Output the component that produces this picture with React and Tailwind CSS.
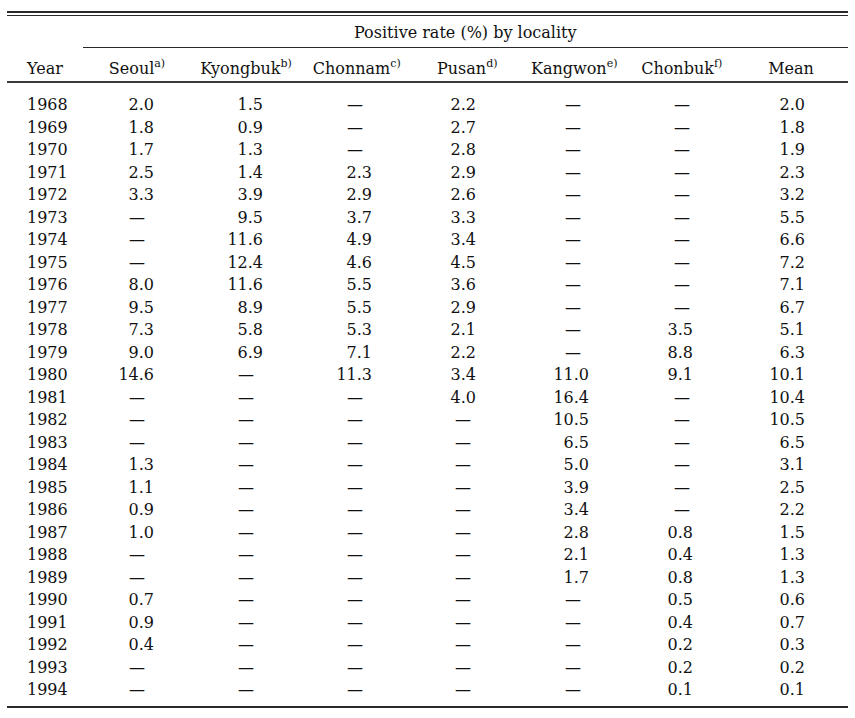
// Positive rate by locality table
import React from 'react';

const D = '—';

const rows = [
  ['1968', '2.0', '1.5', D, '2.2', D, D, '2.0'],
  ['1969', '1.8', '0.9', D, '2.7', D, D, '1.8'],
  ['1970', '1.7', '1.3', D, '2.8', D, D, '1.9'],
  ['1971', '2.5', '1.4', '2.3', '2.9', D, D, '2.3'],
  ['1972', '3.3', '3.9', '2.9', '2.6', D, D, '3.2'],
  ['1973', D, '9.5', '3.7', '3.3', D, D, '5.5'],
  ['1974', D, '11.6', '4.9', '3.4', D, D, '6.6'],
  ['1975', D, '12.4', '4.6', '4.5', D, D, '7.2'],
  ['1976', '8.0', '11.6', '5.5', '3.6', D, D, '7.1'],
  ['1977', '9.5', '8.9', '5.5', '2.9', D, D, '6.7'],
  ['1978', '7.3', '5.8', '5.3', '2.1', D, '3.5', '5.1'],
  ['1979', '9.0', '6.9', '7.1', '2.2', D, '8.8', '6.3'],
  ['1980', '14.6', D, '11.3', '3.4', '11.0', '9.1', '10.1'],
  ['1981', D, D, D, '4.0', '16.4', D, '10.4'],
  ['1982', D, D, D, D, '10.5', D, '10.5'],
  ['1983', D, D, D, D, '6.5', D, '6.5'],
  ['1984', '1.3', D, D, D, '5.0', D, '3.1'],
  ['1985', '1.1', D, D, D, '3.9', D, '2.5'],
  ['1986', '0.9', D, D, D, '3.4', D, '2.2'],
  ['1987', '1.0', D, D, D, '2.8', '0.8', '1.5'],
  ['1988', D, D, D, D, '2.1', '0.4', '1.3'],
  ['1989', D, D, D, D, '1.7', '0.8', '1.3'],
  ['1990', '0.7', D, D, D, D, '0.5', '0.6'],
  ['1991', '0.9', D, D, D, D, '0.4', '0.7'],
  ['1992', '0.4', D, D, D, D, '0.2', '0.3'],
  ['1993', D, D, D, D, D, '0.2', '0.2'],
  ['1994', D, D, D, D, D, '0.1', '0.1'],
];

// dashes sit a little left of the numbers' right edge, per column
const dashPad = ['pr-[9px]', 'pr-[9px]', 'pr-[9px]', 'pr-[5px]', 'pr-[8px]', 'pr-[3px]', 'pr-[3px]'];

const headers = [
  ['Seoul', 'a)'],
  ['Kyongbuk', 'b)'],
  ['Chonnam', 'c)'],
  ['Pusan', 'd)'],
  ['Kangwon', 'e)'],
  ['Chonbuk', 'f)'],
  ['Mean', null],
];

const App = () => {
  return (
    <div
      className="w-[855px] h-[718px] bg-white text-[#111] text-[16px] pt-[11px]"
      style={{ fontFamily: '"DejaVu Serif", serif' }}
    >
      <div className="ml-[7px] w-[841px]">
        {/* double top rule */}
        <div className="h-[5px] border-t-2 border-b border-[#2a2a2a]"></div>

        {/* spanning header */}
        <div className="grid grid-cols-[75.5px_1fr]">
          <div></div>
          <div className="h-[32px] pt-[2px] flex items-center justify-center border-b border-[#2a2a2a]">
            Positive rate (%) by locality
          </div>
        </div>

        {/* column headers */}
        <div className="grid grid-cols-[75.5px_109px_109px_112.5px_108.5px_105.5px_109.5px_109px] h-[35px] pt-[8px] items-center border-b-2 border-[#3a3a3a]">
          <div className="pl-[20px]">Year</div>
          {headers.map(([name, sup]) => (
            <div key={name} className="text-center whitespace-nowrap">
              {name}
              {sup && <sup className="text-[11px] -top-[0.55em]">{sup}</sup>}
            </div>
          ))}
        </div>

        {/* data */}
        <div className="pt-[10px] pb-[5px] border-b-2 border-[#2a2a2a]">
          {rows.map((r) => (
            <div
              key={r[0]}
              className="grid grid-cols-[73px_74px_109px_109px_104px_113px_104px_112px] h-[22.5px] items-center"
            >
              <div className="pl-[20px]">{r[0]}</div>
              {r.slice(1).map((v, i) => (
                <div key={i} className={`text-right whitespace-nowrap ${v === D ? dashPad[i] : ''}`}>
                  {v}
                </div>
              ))}
            </div>
          ))}
        </div>
      </div>
    </div>
  );
};

export default App;
